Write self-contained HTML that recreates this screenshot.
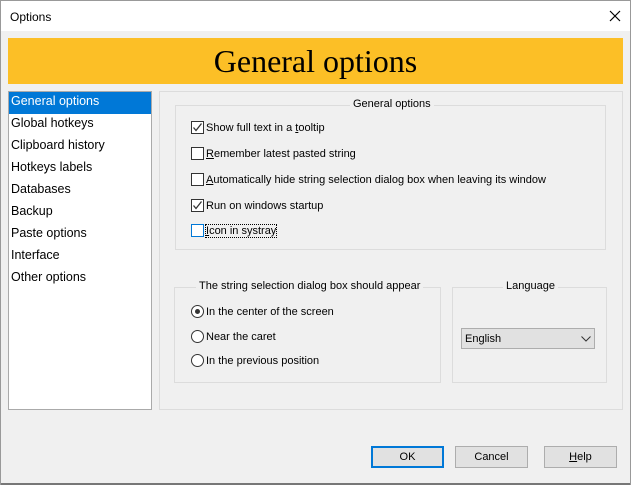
<!DOCTYPE html>
<html><head><style>
*{box-sizing:border-box;margin:0;padding:0}
body{width:631px;height:485px;background:#f0f0f0;font-family:"Liberation Sans",sans-serif;font-size:11px;color:#000;position:relative;overflow:hidden}
.abs{position:absolute}
.title{left:0;top:0;width:631px;height:31px;background:#fff;border:1px solid #999;border-bottom:none;font-size:12px}
.banner{left:8px;top:38px;width:615px;height:46px;background:#fcbf26;font-family:"Liberation Serif",serif;font-size:32px;text-align:center;line-height:46px}
.list{left:8px;top:91px;width:144px;height:319px;background:#fff;border:1px solid #aaa;font-size:12.5px}
.list div{height:22px;line-height:19px;padding-left:2px}
.list .sel{background:#0078d7;color:#fff}
.panel{left:159px;top:91px;width:464px;height:319px;border:1px solid #dcdcdc}
.grp{border:1px solid #dcdcdc}
.gt{background:#f0f0f0;padding:0 3px;top:-8px;white-space:nowrap}
.cb{width:13px;height:13px;border:1px solid #333;background:#fff}
.lbl{white-space:nowrap}
.rd{width:13px;height:13px;border:1px solid #333;border-radius:50%;background:#fff}
.btn{height:22px;border:1px solid #adadad;background:#e1e1e1;text-align:center;line-height:20px;top:446px;width:73px}
</style></head><body>
<div class="abs title"><span class="abs" style="left:9px;top:9px">Options</span>
<svg class="abs" style="left:608px;top:9px" width="12" height="12"><path d="M1 1L11 11M11 1L1 11" stroke="#000" stroke-width="1.2"/></svg></div>
<div class="abs banner">General options</div>
<div class="abs list">
<div class="sel">General options</div><div>Global hotkeys</div><div>Clipboard history</div><div>Hotkeys labels</div><div>Databases</div><div>Backup</div><div>Paste options</div><div>Interface</div><div>Other options</div></div>
<div class="abs panel"></div>
<div class="abs grp" style="left:175px;top:105px;width:431px;height:145px"><span class="abs gt" style="left:174px">General options</span></div>
<div class="abs cb" style="left:191px;top:121px"><svg width="11" height="11" class="abs" style="left:0;top:0"><path d="M1.5 5.5L4 8.5L9.5 1.5" stroke="#333" fill="none" stroke-width="1.3"/></svg></div>
<span class="abs lbl" style="left:206px;top:122px">Show full text in a <u>t</u>ooltip</span>
<div class="abs cb" style="left:191px;top:147px"></div>
<span class="abs lbl" style="left:206px;top:148px"><u>R</u>emember latest pasted string</span>
<div class="abs cb" style="left:191px;top:173px"></div>
<span class="abs lbl" style="left:206px;top:174px"><u>A</u>utomatically hide string selection dialog box when leaving its window</span>
<div class="abs cb" style="left:191px;top:199px"><svg width="11" height="11" class="abs" style="left:0;top:0"><path d="M1.5 5.5L4 8.5L9.5 1.5" stroke="#333" fill="none" stroke-width="1.3"/></svg></div>
<span class="abs lbl" style="left:206px;top:200px">Run on windows startup</span>
<div class="abs cb" style="left:191px;top:224px;border-color:#0078d7"></div>
<span class="abs lbl" style="left:206px;top:225px;outline:1px dotted #000"><u>I</u>con in systray</span>
<div class="abs grp" style="left:174px;top:287px;width:267px;height:96px"><span class="abs gt" style="left:21px">The string selection dialog box should appear</span></div>
<div class="abs rd" style="left:191px;top:305px"><div class="abs" style="left:3px;top:3px;width:5px;height:5px;border-radius:50%;background:#333"></div></div>
<span class="abs lbl" style="left:206px;top:306px">In the center of the screen</span>
<div class="abs rd" style="left:191px;top:330px"></div>
<span class="abs lbl" style="left:206px;top:331px">Near the caret</span>
<div class="abs rd" style="left:191px;top:354px"></div>
<span class="abs lbl" style="left:206px;top:355px">In the previous position</span>
<div class="abs grp" style="left:452px;top:287px;width:155px;height:96px"><span class="abs gt" style="left:50px">Language</span></div>
<div class="abs" style="left:461px;top:328px;width:134px;height:21px;border:1px solid #adadad;background:#e1e1e1;padding-left:3px;line-height:20px">English
<svg class="abs" style="left:119px;top:7px" width="10" height="6"><path d="M0.5 0.5L5 5L9.5 0.5" stroke="#333" fill="none"/></svg></div>
<div class="abs btn" style="left:371px;border:2px solid #0078d7;line-height:19px">OK</div>
<div class="abs btn" style="left:455px;line-height:21px">Cancel</div>
<div class="abs btn" style="left:544px;line-height:21px"><u>H</u>elp</div>
<div class="abs" style="left:0;top:483px;width:631px;height:2px;background:#777"></div>
<div class="abs" style="left:0;top:0;width:1px;height:485px;background:#999"></div>
<div class="abs" style="left:630px;top:0;width:1px;height:485px;background:#999"></div>
</body></html>
